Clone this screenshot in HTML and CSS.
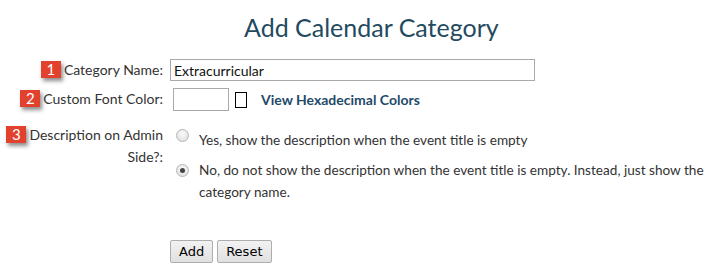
FILE: index.html
```html
<!doctype html>
<html lang="en">
<head>
    <meta charset="UTF-8">
    <title>Add Calendar Category</title>
    <link rel="stylesheet" href="styles.css">
</head>
<body>
    <div class="page">
        <h1 class="title">Add Calendar Category</h1>
        <form class="form">
            <div class="row">
                <label class="label"><span class="badge">1</span>Category Name:</label>
                <div class="field">
                    <input class="text" type="text" value="Extracurricular">
                </div>
            </div>
            <div class="row">
                <label class="label"><span class="badge">2</span>Custom Font Color:</label>
                <div class="field color-field">
                    <input class="color" type="text" value="">
                    <span class="swatch"></span>
                    <a class="hex-link" href="#">View Hexadecimal Colors</a>
                </div>
            </div>
            <div class="row row-desc">
                <label class="label"><span class="badge">3</span>Description on Admin Side?:</label>
                <div class="field options">
                    <label class="option"><input type="radio" name="desc"><span>Yes, show the description when the event title is empty</span></label>
                    <label class="option"><input type="radio" name="desc" checked><span>No, do not show the description when the event title is empty. Instead, just show the category name.</span></label>
                </div>
            </div>
            <div class="buttons">
                <input class="btn" type="button" value="Add">
                <input class="btn" type="button" value="Reset">
            </div>
        </form>
    </div>
</body>
</html>
```

FILE: styles.css
```css
*{
    margin: 0;
    padding: 0;
    box-sizing: border-box;
}
html,body{
    width: 100%;
    height: 100%;
    overflow: hidden;
    background: #fff;
}
body{
    font-family: Lato, "Open Sans", sans-serif;
    font-size: 14px;
    color: #333;
}
.page{
    width: 713px;
}
.title{
    padding: 12px 0 0 244px;
    height: 52px;
    font-size: 25px;
    font-weight: 400;
    color: #244a5f;
    line-height: 30px;
}
.form{
    display: flex;
    flex-direction: column;
}
.row{
    display: grid;
    grid-template-columns: 165px 1fr;
    align-items: start;
}
.label{
    text-align: right;
    line-height: 22px;
    padding-right: 2px;
}
.badge{
    display: inline-block;
    width: 20px;
    height: 17px;
    margin-right: 3px;
    background: #e2412d;
    color: #fff;
    font-size: 15px;
    line-height: 17px;
    text-align: center;
    box-shadow: 2px 3px 4px rgba(0,0,0,.45);
}
.row:nth-child(1){
    height: 31px;
    padding-top: 7px;
}
.text{
    margin-left: 5px;
    width: 365px;
    height: 22px;
    border: 1px solid #a9a9a9;
    padding: 0 3px;
    font-family: Lato, sans-serif;
    font-size: 14px;
    color: #111;
    outline: none;
}
.row:nth-child(2){
    height: 37px;
    padding-top: 5px;
}
.color-field{
    display: flex;
    align-items: center;
}
.color{
    margin-left: 8px;
    width: 56px;
    height: 23px;
    border: 1px solid #a9a9a9;
    outline: none;
}
.swatch{
    margin-left: 6px;
    width: 12px;
    height: 16px;
    border: 1px solid #000;
}
.hex-link{
    margin-left: 14px;
    font-size: 14px;
    font-weight: 700;
    color: #1f4a6a;
    text-decoration: none;
}
.row-desc{
    grid-template-columns: 165px 548px;
    height: 120px;
    padding-top: 4px;
}
.options{
    display: flex;
    flex-direction: column;
    gap: 8px;
    font-size: 13.6px;
}
.option{
    display: flex;
    align-items: flex-start;
    line-height: 22px;
}
.option input{
    appearance: none;
    -webkit-appearance: none;
    margin: 5px 10px 0 11px;
    width: 13px;
    height: 13px;
    flex-shrink: 0;
    border: 1px solid #b5b5b5;
    border-radius: 50%;
    background: radial-gradient(circle at 50% 35%, #fafafa, #dcdcdc);
    display: grid;
    place-items: center;
}
.option input:checked::after{
    content: "";
    width: 5px;
    height: 5px;
    border-radius: 50%;
    background: #444;
}
.option:first-child span{
    padding-top: 5px;
}
.buttons{
    display: flex;
    gap: 4px;
    padding-left: 170px;
}
.btn{
    height: 23px;
    padding: 0 8px;
    font-family: Tahoma, "DejaVu Sans", sans-serif;
    font-size: 13px;
    color: #000;
    border: 1px solid #adadad;
    border-radius: 2px;
    background: linear-gradient(#f2f2f2, #e0e0e0);
}
```
